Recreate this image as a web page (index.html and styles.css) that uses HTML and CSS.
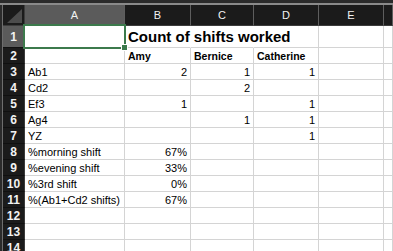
FILE: index.html
```html
<!DOCTYPE html>
<html lang="en">
<head>
    <meta charset="UTF-8">
    <meta name="viewport" content="width=device-width, initial-scale=1.0">
    <title>Count of shifts worked</title>
    <link rel="stylesheet" href="styles.css">
</head>
<body>
    <div class="topbar"></div>
    <div class="frame">
        <div class="edge"></div>
        <div class="sheet">
            <!-- column headers -->
            <div class="corner"><span class="tri"></span></div>
            <div class="colhead selected">A</div>
            <div class="colhead">B</div>
            <div class="colhead">C</div>
            <div class="colhead">D</div>
            <div class="colhead">E</div>
            <div class="colhead"></div>

            <!-- row 1 -->
            <div class="rowhead selected">1</div>
            <div class="cell"><div class="selection"><span class="handle"></span></div></div>
            <div class="cell title-cell"><span class="title">Count of shifts worked</span></div>
            <div class="cell spill"></div>
            <div class="cell"></div>
            <div class="cell"></div>
            <div class="cell"></div>

            <!-- row 2 -->
            <div class="rowhead">2</div>
            <div class="cell"></div>
            <div class="cell bold">Amy</div>
            <div class="cell bold">Bernice</div>
            <div class="cell bold">Catherine</div>
            <div class="cell"></div>
            <div class="cell"></div>

            <div class="rowhead">3</div>
            <div class="cell">Ab1</div>
            <div class="cell num">2</div>
            <div class="cell num">1</div>
            <div class="cell num">1</div>
            <div class="cell"></div>
            <div class="cell"></div>

            <div class="rowhead">4</div>
            <div class="cell">Cd2</div>
            <div class="cell"></div>
            <div class="cell num">2</div>
            <div class="cell"></div>
            <div class="cell"></div>
            <div class="cell"></div>

            <div class="rowhead">5</div>
            <div class="cell">Ef3</div>
            <div class="cell num">1</div>
            <div class="cell"></div>
            <div class="cell num">1</div>
            <div class="cell"></div>
            <div class="cell"></div>

            <div class="rowhead">6</div>
            <div class="cell">Ag4</div>
            <div class="cell"></div>
            <div class="cell num">1</div>
            <div class="cell num">1</div>
            <div class="cell"></div>
            <div class="cell"></div>

            <div class="rowhead">7</div>
            <div class="cell">YZ</div>
            <div class="cell"></div>
            <div class="cell"></div>
            <div class="cell num">1</div>
            <div class="cell"></div>
            <div class="cell"></div>

            <div class="rowhead">8</div>
            <div class="cell">%morning shift</div>
            <div class="cell num">67%</div>
            <div class="cell"></div>
            <div class="cell"></div>
            <div class="cell"></div>
            <div class="cell"></div>

            <div class="rowhead">9</div>
            <div class="cell">%evening shift</div>
            <div class="cell num">33%</div>
            <div class="cell"></div>
            <div class="cell"></div>
            <div class="cell"></div>
            <div class="cell"></div>

            <div class="rowhead">10</div>
            <div class="cell">%3rd shift</div>
            <div class="cell num">0%</div>
            <div class="cell"></div>
            <div class="cell"></div>
            <div class="cell"></div>
            <div class="cell"></div>

            <div class="rowhead">11</div>
            <div class="cell">%(Ab1+Cd2 shifts)</div>
            <div class="cell num">67%</div>
            <div class="cell"></div>
            <div class="cell"></div>
            <div class="cell"></div>
            <div class="cell"></div>

            <div class="rowhead">12</div>
            <div class="cell"></div>
            <div class="cell"></div>
            <div class="cell"></div>
            <div class="cell"></div>
            <div class="cell"></div>
            <div class="cell"></div>

            <div class="rowhead">13</div>
            <div class="cell"></div>
            <div class="cell"></div>
            <div class="cell"></div>
            <div class="cell"></div>
            <div class="cell"></div>
            <div class="cell"></div>

            <div class="rowhead">14</div>
            <div class="cell"></div>
            <div class="cell"></div>
            <div class="cell"></div>
            <div class="cell"></div>
            <div class="cell"></div>
            <div class="cell"></div>
        </div>
    </div>
</body>
</html>
```

FILE: styles.css
```css
body {
    margin: 0;
    font-family: 'Liberation Sans', Arial, sans-serif;
    background-color: #fff;
    color: #000;
    overflow: hidden;
}

.topbar {
    height: 3px;
    background-color: #2b2b2b;
    border-bottom: 2px solid #8a8a8a;
}

.frame {
    display: flex;
}

.edge {
    width: 2px;
    background-color: #2b2b2b;
    border-right: 1px solid #6e6e6e;
    flex-shrink: 0;
}

.sheet {
    flex: 1;
    display: grid;
    grid-template-columns: 22px 100px 66px 63px 65px 65px 1fr;
    grid-template-rows: 21px 22px repeat(13, 16px);
}

.corner {
    position: relative;
    background-color: #1b1b1b;
    border-right: 1px solid #3c3c3c;
    border-bottom: 1px solid #3c3c3c;
}

.tri {
    position: absolute;
    right: 2px;
    bottom: 2px;
    width: 0;
    height: 0;
    border-left: 15px solid transparent;
    border-bottom: 14px solid #4c4c4c;
}

.colhead {
    background-color: #1b1b1b;
    color: #f2f2f2;
    font-size: 11px;
    display: flex;
    align-items: center;
    justify-content: center;
    border-right: 1px solid #5e5e5e;
    border-bottom: 1px solid #3c3c3c;
}

.rowhead {
    background-color: #1b1b1b;
    color: #f2f2f2;
    font-size: 12px;
    font-weight: bold;
    display: flex;
    align-items: center;
    justify-content: center;
    border-right: 1px solid #3c3c3c;
    border-bottom: 1px solid #101010;
}

.colhead.selected,
.rowhead.selected {
    background-color: #5b5b5b;
}

.cell {
    position: relative;
    font-size: 11px;
    display: flex;
    align-items: flex-end;
    padding: 0 3px 1px 3px;
    border-right: 1px solid #d4d4d4;
    border-bottom: 1px solid #d4d4d4;
    white-space: nowrap;
    min-width: 0;
}

.cell.num {
    justify-content: flex-end;
}

.cell.bold {
    font-weight: bold;
    font-size: 10.5px;
}

.title-cell {
    overflow: visible;
    z-index: 1;
    border-right-color: transparent;
}

.cell.spill {
    border-right-color: transparent;
}

.title {
    font-size: 15px;
    font-weight: bold;
    padding-bottom: 1px;
}

.selection {
    position: absolute;
    left: -2px;
    top: -2px;
    right: -2px;
    bottom: -2px;
    border: 2px solid #3c7a4c;
    z-index: 2;
}

.handle {
    position: absolute;
    right: -4px;
    bottom: -4px;
    width: 5px;
    height: 5px;
    background-color: #3c7a4c;
    border: 1px solid #fff;
}
```
